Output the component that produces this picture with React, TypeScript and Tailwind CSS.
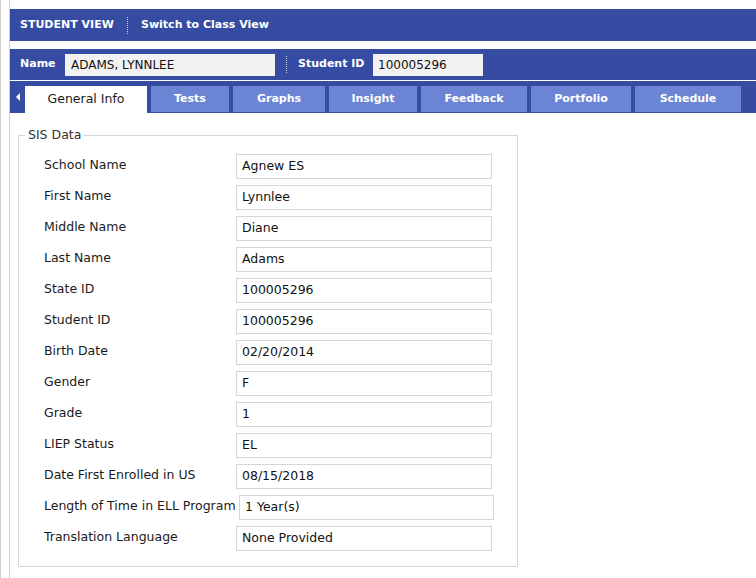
import { useState } from "react";

const tabs = ["General Info", "Tests", "Graphs", "Insight", "Feedback", "Portfolio", "Schedule"];
const tabWidths = ["w-[122px]", "w-[78px]", "w-[92px]", "w-[88px]", "w-[106px]", "w-[100px]", "w-[106px]"];

const fields: [string, string][] = [
  ["School Name", "Agnew ES"],
  ["First Name", "Lynnlee"],
  ["Middle Name", "Diane"],
  ["Last Name", "Adams"],
  ["State ID", "100005296"],
  ["Student ID", "100005296"],
  ["Birth Date", "02/20/2014"],
  ["Gender", "F"],
  ["Grade", "1"],
  ["LIEP Status", "EL"],
  ["Date First Enrolled in US", "08/15/2018"],
  ["Length of Time in ELL Program", "1 Year(s)"],
  ["Translation Language", "None Provided"],
];

function Divider() {
  return <span className="block h-[17px] border-l border-dotted border-white/70" />;
}

export default function App() {
  const [active, setActive] = useState(0);

  return (
    <div
      className="min-h-[578px] bg-white border-l border-[#cfcfcf] pl-2 text-[12.5px] text-[#1a1a1a]"
      style={{ fontFamily: '"DejaVu Sans", "Open Sans", sans-serif' }}
    >
      <div className="min-h-[578px] border-l border-[#cfcfcf] pt-[9px]">
        {/* top bar */}
        <div className="flex h-[32px] items-center bg-[#364ca2] pl-[10px] text-[11px] font-bold text-white">
          <span className="w-[107px] whitespace-nowrap">STUDENT VIEW</span>
          <Divider />
          <span className="ml-[13px]">Switch to Class View</span>
        </div>

        {/* name bar */}
        <div className="mt-[8px] flex h-[32px] items-center border-b border-white bg-[#364ca2] pl-[10px] text-white">
          <span className="w-[45px] text-[11px] font-bold">Name</span>
          <div className="flex h-[22px] w-[210px] items-center bg-[#f2f2f2] px-[6px] text-[12px] text-[#111]">
            ADAMS, LYNNLEE
          </div>
          <span className="ml-[11px] mr-[11px]">
            <Divider />
          </span>
          <span className="w-[75px] text-[11px] font-bold">Student ID</span>
          <div className="flex h-[22px] w-[110px] items-center bg-[#f2f2f2] px-[5px] text-[12px] text-[#111]">
            100005296
          </div>
        </div>

        {/* tabs */}
        <div className="flex h-[32px] items-end bg-[#364ca2] pb-px">
          <div className="flex h-full w-[15px] items-center justify-center">
            <span className="h-0 w-0 border-y-[4px] border-r-[4px] border-y-transparent border-r-white" />
          </div>
          <div className="flex gap-[4px]">
            {tabs.map((t, i) => (
              <button
                key={t}
                onClick={() => setActive(i)}
                className={`${tabWidths[i]} flex items-center justify-center ${
                  i === active
                    ? "-mb-px h-[27px] bg-white pb-px text-[12.5px] text-[#1a1a1a]"
                    : "h-[26px] bg-[#6c84d4] text-[11px] font-bold text-white"
                }`}
              >
                {t}
              </button>
            ))}
          </div>
        </div>

        {/* content */}
        <div className="px-[8px] pt-[13px]">
          <fieldset className="w-[500px] border border-[#d6d6d6] pb-[15px] pt-[9px]">
            <legend className="ml-[6px] px-[3px] text-[#333]">SIS Data</legend>
            <div className="flex flex-col gap-[6px] pl-[25px]">
              {fields.map(([label, value]) => {
                const wide = label.startsWith("Length");
                return (
                  <div key={label} className="flex items-start">
                    <span
                      className={`whitespace-nowrap pt-[2px] font-medium ${
                        wide ? "w-[195px]" : "w-[192px]"
                      } shrink-0`}
                    >
                      {label}
                    </span>
                    <div
                      className={`flex h-[25px] items-center border border-[#d6d6d6] px-[5px] text-[#111] ${
                        wide ? "w-[255px]" : "w-[256px]"
                      }`}
                    >
                      {value}
                    </div>
                  </div>
                );
              })}
            </div>
          </fieldset>
        </div>
      </div>
    </div>
  );
}
